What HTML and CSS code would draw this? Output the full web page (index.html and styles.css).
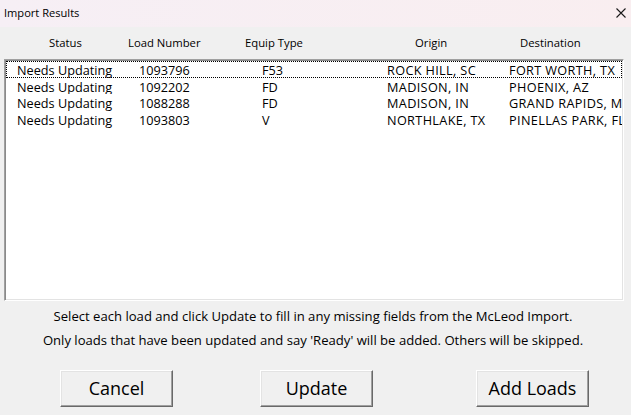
FILE: index.html
```html
<!DOCTYPE html>
<html>
<head>
<meta charset="utf-8">
<link rel="stylesheet" href="styles.css">
</head>
<body>
<div class="dialog">
  <div class="titlebar">
    <span class="title">Import Results</span>
    <svg class="close" width="10" height="10" viewBox="0 0 10 10"><path d="M0.5 0.5 L9.5 9.5 M9.5 0.5 L0.5 9.5" stroke="#1a1a1a" stroke-width="1.1" fill="none"/></svg>
  </div>
  <div class="headers">
    <span class="h h-status">Status</span>
    <span class="h">Load Number</span>
    <span class="h">Equip Type</span>
    <span class="h">Origin</span>
    <span class="h">Destination</span>
  </div>
  <div class="listbox">
    <div class="row focused"><span>Needs Updating</span><span>1093796</span><span>F53</span><span class="caps">ROCK HILL, SC</span><span class="caps">FORT WORTH, TX</span></div>
    <div class="row"><span>Needs Updating</span><span>1092202</span><span>FD</span><span class="caps">MADISON, IN</span><span class="caps">PHOENIX, AZ</span></div>
    <div class="row"><span>Needs Updating</span><span>1088288</span><span>FD</span><span class="caps">MADISON, IN</span><span class="caps">GRAND RAPIDS, MI</span></div>
    <div class="row"><span>Needs Updating</span><span>1093803</span><span>V</span><span class="caps">NORTHLAKE, TX</span><span class="caps">PINELLAS PARK, FL</span></div>
  </div>
  <div class="messages">
    <p class="msg">Select each load and click Update to fill in any missing fields from the McLeod Import.</p>
    <p class="msg">Only loads that have been updated and say 'Ready' will be added. Others will be skipped.</p>
  </div>
  <div class="buttons">
    <button class="btn">Cancel</button>
    <button class="btn btn-update">Update</button>
    <button class="btn btn-add">Add Loads</button>
  </div>
</div>
</body>
</html>
```
FILE: styles.css
```css
html, body {
  margin: 0;
  padding: 0;
}
body {
  width: 631px;
  height: 415px;
  overflow: hidden;
  background: #f0f0f0;
  font-family: "Open Sans", "Noto Sans", sans-serif;
  color: #000;
}
.dialog {
  display: flex;
  flex-direction: column;
  height: 415px;
}
.titlebar {
  height: 27px;
  flex: none;
  display: flex;
  align-items: center;
  justify-content: space-between;
  padding: 0 5px 3px 4px;
  box-sizing: border-box;
  background: linear-gradient(90deg, #f6eff5, #f9eef0);
}
.title {
  font-size: 11.1px;
  color: #000;
}
.close {
  display: block;
  margin-top: 2px;
}
.headers {
  height: 32px;
  flex: none;
  display: grid;
  grid-template-columns: 128px 117px 170px 105px 1fr;
  align-items: center;
  font-size: 11.3px;
  font-weight: 500;
  padding-bottom: 1px;
  box-sizing: border-box;
}
.h-status {
  padding-left: 49px;
}
.listbox {
  margin-left: 4px;
  width: 620px;
  height: 242px;
  flex: none;
  box-sizing: border-box;
  background: #fff;
  border-top: 1px solid #a0a0a0;
  border-left: 1px solid #a0a0a0;
  border-right: 1px solid #fff;
  border-bottom: 1px solid #fff;
  box-shadow: inset 1px 1px 0 #8a8a8a, inset -1px -1px 0 #e3e3e3;
  padding: 1px 1px 0 1px;
  overflow: hidden;
}
.row {
  display: grid;
  grid-template-columns: 122px 123px 125px 122px 1fr;
  padding: 2px 0 0 11px;
  height: 16.67px;
  line-height: 14.67px;
  font-size: 12.7px;
  font-weight: 500;
  white-space: nowrap;
  overflow: hidden;
  width: 616px;
  box-sizing: border-box;
}
.caps {
  letter-spacing: 0.35px;
}
.row.focused {
  outline: 1px dotted #000;
  outline-offset: -1px;
}
.messages {
  padding: 3px 5px 0 0;
  text-align: center;
  font-size: 13.1px;
  font-weight: 500;
}
.msg {
  margin: 0;
  height: 24px;
  line-height: 24px;
}
.buttons {
  display: flex;
  padding-left: 60px;
  margin-top: 18px;
}
.btn {
  width: 113px;
  height: 37px;
  box-sizing: border-box;
  font-family: "Open Sans", "Noto Sans", sans-serif;
  font-size: 18px;
  font-weight: 500;
  color: #000;
  background: #f0f0f0;
  border-top: 1px solid #fff;
  border-left: 1px solid #fff;
  border-right: 1px solid #696969;
  border-bottom: 1px solid #696969;
  box-shadow: inset -1px -1px 0 #a0a0a0, inset 1px 1px 0 #e3e3e3;
  padding: 0 0 2px 0;
  margin: 0;
}
.btn-update {
  margin-left: 87px;
}
.btn-add {
  margin-left: 103px;
}
```
